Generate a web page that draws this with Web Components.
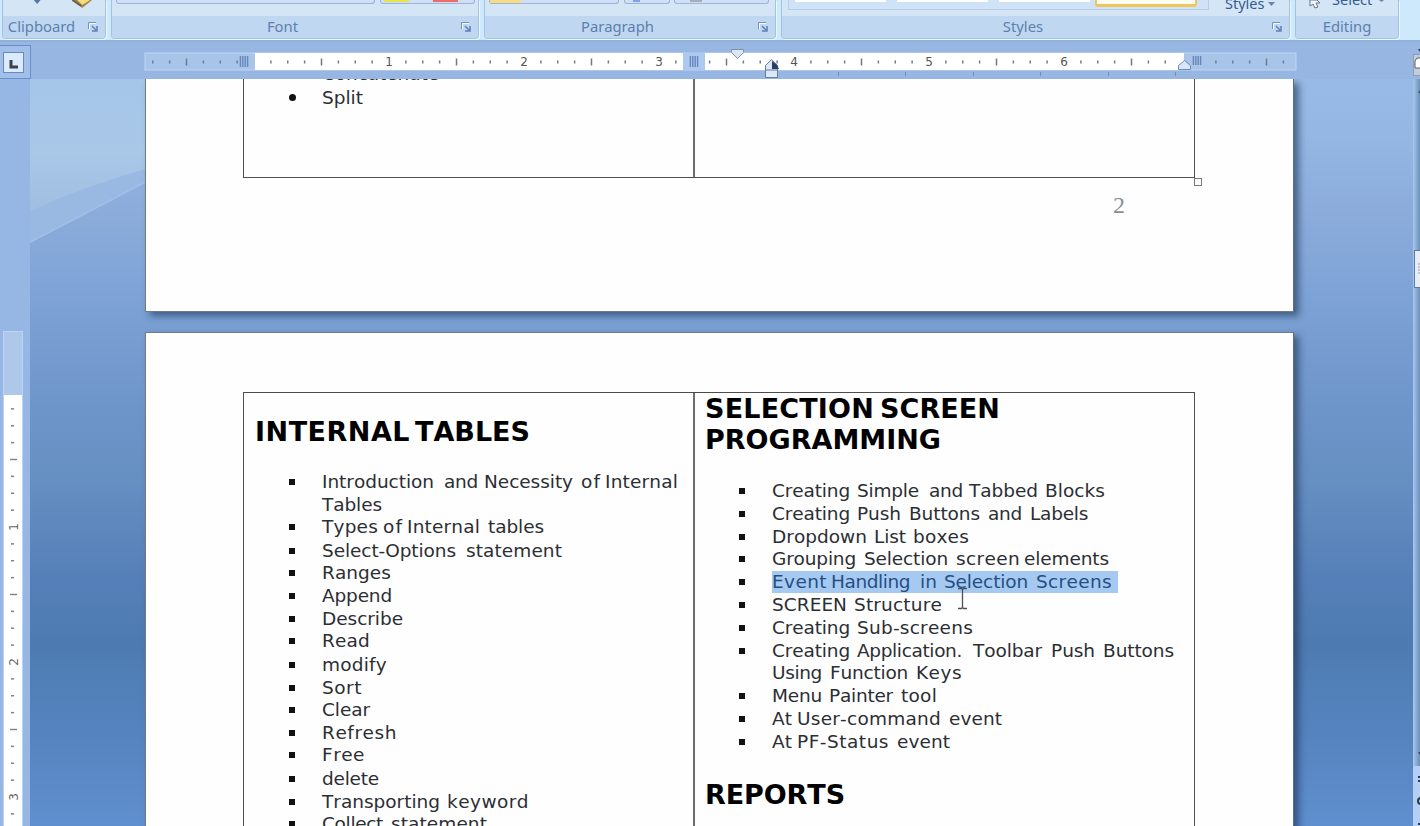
<!DOCTYPE html>
<html lang="en">
<head>
<meta charset="utf-8">
<title>Document editor</title>
<style>
html,body{margin:0;height:826px;width:1420px;overflow:hidden;background:#96b7e3}
</style>
</head>
<body>
<editor-app></editor-app>
<script>
const define=(name,html,setup)=>{
  customElements.define(name,class extends HTMLElement{
    constructor(){super();this.attachShadow({mode:'open'});}
    connectedCallback(){
      const t=document.createElement('template');t.innerHTML=html;
      this.shadowRoot.replaceChildren(t.content.cloneNode(true));
      if(setup)setup(this,this.shadowRoot);
    }
  });
};

/* Ribbon group: clipped controls above a caption band */
define('ribbon-group',`<style>
:host{display:flex;flex-direction:column;box-sizing:border-box;height:39px;border:1px solid #a5c1e0;border-top:0;border-radius:0 0 4px 4px;background:#d2e4f6;box-shadow:1px 1px 0 #e9f8ff;overflow:hidden;font:14.8px "Noto Sans","Open Sans",sans-serif;color:#5d80ae}
.body{height:16px;flex:none;background:#d4e5f6;display:flex}
.cap{height:22px;background:#bfd7f0;display:flex;align-items:center}
.cap span{flex:1;text-align:center;line-height:21px;margin-top:-1px}
svg{width:12px;height:12px;margin:-1px 6px 0 7px;flex:none}
</style><div class="body"><slot></slot></div><div class="cap"><span></span></div>`,(h,r)=>{
  r.querySelector('span').textContent=h.getAttribute('label');
  if(!h.hasAttribute('plain'))r.querySelector('.cap').insertAdjacentHTML('beforeend','<svg viewBox="0 0 12 12" fill="none"><path d="M1.5 8V1.5H9" stroke="#7692bd"/><path d="M2.5 8V2.5H9" stroke="#f2f9ff"/><path d="M5 5l4 4M10 5v5H5" stroke="#6283b4" stroke-width="1.6"/></svg>');
});

/* Bottom edge of a control strip */
define('control-edge',`<style>
:host{display:block;box-sizing:border-box;height:4px;border:1px solid #9bb4d8;border-top:0;border-radius:0 0 3px 3px;background:#cfe0f6}
</style><slot></slot>`);

define('editor-ribbon',`<style>
:host{display:flex;gap:5px;height:42px;box-sizing:border-box;padding-left:2px;background:#cde9fb;border-bottom:2px solid #91b1dc;font-family:"Noto Sans","Open Sans",sans-serif}
svg{display:block}
.sw{display:block;height:2px}
.gallery{box-sizing:border-box;display:flex;gap:11px;width:421px;height:10px;border:1px solid #b6cce8;border-top:0;margin-left:6px;padding-left:6px;background:#cfe2f6}
.gallery i{width:91px;height:2px;background:#fff}
.gallery i.on{height:7px;width:102px;margin-left:-6px;box-sizing:border-box;background:#fffdf2;border:2px solid #efc65c;border-bottom-width:3px;border-top:0;border-radius:0 0 3px 3px}
.txt{font-size:14.5px;line-height:16px;color:#365b92;margin-top:-5px}
</style>
<ribbon-group label="Clipboard" style="width:104px"><svg width="102" height="10" viewBox="0 0 103 10"><path d="M31 0h7l-3.5 4z" fill="#507aa4"/><path d="M70 0h20l-10 8z" fill="#a18a4b"/><path d="M75 0h13l-8 5z" fill="#f4dc7e"/><path d="M70 0l9 6" stroke="#705d4c" stroke-width="2"/></svg></ribbon-group>
<ribbon-group label="Font" style="width:368px"><control-edge style="width:259px;margin-left:4px"></control-edge><control-edge style="width:95px;margin-left:5px"><span style="display:flex;gap:24px;padding-left:3px"><b class="sw" style="width:25px;background:#e8e44c"></b><b class="sw" style="width:25px;background:#f06a68"></b></span></control-edge></ribbon-group>
<ribbon-group label="Paragraph" style="width:292px"><control-edge style="width:130px;margin-left:4px"><b class="sw" style="width:31px;height:3px;background:#f7dc83"></b></control-edge><control-edge style="width:46px;margin-left:5px"><b class="sw" style="width:7px;margin-left:8px;background:#7aa3e8"></b></control-edge><control-edge style="width:95px;margin-left:4px"><b class="sw" style="width:12px;margin-left:15px;background:#a9abb4"></b></control-edge></ribbon-group>
<ribbon-group label="Styles" style="width:509px"><span class="gallery"><i></i><i></i><i></i><i class="on"></i></span><span class="txt" style="margin-left:16px">Styles</span><svg width="9" height="6" style="margin:1px 0 0 3px"><path d="M1 1h7l-3.500 4z" fill="#6685b0"/></svg></ribbon-group>
<ribbon-group label="Editing" plain style="width:104px"><svg width="14" height="9" style="margin-left:13px"><path d="M1 0v6l3-2 2 4 3-1-2-4h4L8 0z" fill="#f4f8fc" stroke="#62748e"/></svg><span class="txt" style="margin:-9px 0 0 9px">Select</span><svg width="7" height="3" style="margin-left:6px"><path d="M1 0h5L3.500 2z" fill="#6685b0"/></svg></ribbon-group>`);

/* Ruler scale. Inches are 135px with eighth-inch ticks. */
const INCH=135;
define('h-ruler',`<style>
:host{display:flex;align-items:stretch;height:37px;background:#97b6e2}
.tab{box-sizing:border-box;width:31px;height:34px;margin-top:3px;border:1px solid #698fd0;border-left:0;display:flex;align-items:center;padding-left:3px;background:#a2bfe9}
svg{display:block}
.scale{margin-left:113px}
text{font:12px "DejaVu Sans",sans-serif;fill:#555;text-anchor:middle}
</style><div class="tab"><svg width="21" height="21"><rect x=".5" y=".5" width="20" height="20" fill="#dcebfb" stroke="#6689c4"/><path d="M8 8v7h7" fill="none" stroke="#3b4351" stroke-width="3"/></svg></div><svg class="scale" width="1154" height="37" viewBox="144 42 1154 37"></svg>`,(h,r)=>{
  let s='<rect x="145" y="53" width="1151" height="17" fill="#a9c4e9" stroke="#bfd5f5"/><rect x="255" y="53" width="929" height="17" fill="#fff"/><rect x="683" y="53" width="22" height="17" fill="#aec9f0"/>';
  for(let i=-6;i<=61;i++){
    const x=254+i*INCH/8;
    if((x>238&&x<256)||(x>682&&x<705)||(x>767&&x<775)||(x>1182&&x<1204)||x>1290)continue;
    if(i>0&&i%8===0)s+=`<text x="${x}" y="66">${i/8}</text>`;
    else if(i%4===0)s+=`<path d="M${x} 58.500v7" stroke="#6f7884" stroke-width="1.5"/>`;
    else s+=`<path d="M${x} 60.500v3" stroke="#707b8d" stroke-width="1.5"/>`;
  }
  for(const x of [244,694,1197])for(let k=-3.6;k<=4;k+=2.4)s+=`<path d="M${x+k} 56v11" stroke="#6787ba" stroke-width="1.4" ${x===1197?'stroke-dasharray="9 2"':''}/>`;
  for(const x of [839,906,974,1041,1109,1176])s+=`<path d="M${x-.5} 72v4" stroke="#7589a8"/>`;
  s+='<path d="M731.500 49.500h12v3l-6 6-6-6z" fill="#dce6f3" stroke="#7d90ae"/><path d="M765.500 77.500v-12l6-6 6 6v12z" fill="#dce8f8" stroke="#617ca7"/><path d="M765.500 70h12" stroke="#617ca7"/><path d="M772 61v8h7l-2-4z" fill="#283f66"/><path d="M1178.500 69.500v-4l6-5 6 5v4z" fill="#d9e6f8" stroke="#6e8bbb"/>';
  r.querySelector('.scale').innerHTML=s;
});

define('v-ruler',`<style>
:host{display:block;width:30px;flex:none;background:#96b7e3}
svg{display:block}
text{font:12px "DejaVu Sans",sans-serif;fill:#666;text-anchor:middle}
</style><svg width="30" height="747" viewBox="0 79 30 747"></svg>`,(h,r)=>{
  let s='<rect x="3.500" y="331.500" width="19" height="520" fill="#aec8e9" stroke="#b9d3f5"/><rect x="4" y="395" width="18" height="440" fill="#fff"/>';
  for(let i=1;i<26;i++){
    const y=392+i*INCH/8;
    if(i%8===0)s+=`<text transform="translate(18 ${y}) rotate(-90)">${i/8}</text>`;
    else if(i%4===0)s+=`<path d="M10 ${y}h7" stroke="#7d8187" stroke-width="1.4"/>`;
    else s+=`<path d="M11 ${y}h3" stroke="#7d8187" stroke-width="1.5"/>`;
  }
  r.querySelector('svg').innerHTML=s;
});

/* A typeset line. Each word is written text@start-end, in pixels from the line origin. */
const ctx=document.createElement('canvas').getContext('2d');
define('doc-line',`<style>
:host{display:flex;align-items:flex-end;height:22.7px;color:#2b2e33;font:18.5px "DejaVu Sans",sans-serif}
.dot{width:67px;flex:none;height:22px;display:flex;align-items:center}
.dot::before{content:"";width:6px;height:6px;background:#111;margin-left:33px}
:host([bullet=none]) .dot::before,:host([head]) .dot::before{display:none}
:host([bullet=round]) .dot::before{border-radius:50%;width:7px;height:7px}
:host([head]) .dot{width:0}
:host([head]){font-size:27px;font-weight:bold;color:#000}
.t{white-space:pre;line-height:22px;letter-spacing:0;margin-left:-1px;font-kerning:none;font-variant-ligatures:none}
:host([head]) .t{line-height:32px}
:host([marked]) .t{background:#a6c9f2;color:#254f83;margin-left:-1px;width:346px}
</style><span class="dot"></span><span class="t"></span>`,(h,r)=>{
  const head=h.hasAttribute('head'),size=head?27:18.5;
  ctx.font=(head?'bold ':'')+size+'px "DejaVu Sans"';
  ctx.fontKerning='none';
  const sp=ctx.measureText(' ').width,t=r.querySelector('.t');
  let cur=0;
  h.getAttribute('words').split(' ').forEach((w,i)=>{
    const [text,range]=w.split('@'),[a,b]=range.split('-').map(Number);
    const nat=ctx.measureText(text).width,ls=(b-a+2-nat)/text.length;
    if(i){t.append(' ');cur+=sp;}
    const e=document.createElement('span');
    e.textContent=text;e.style.letterSpacing=ls+'px';e.style.marginLeft=(a-cur)+'px';
    t.append(e);cur=a+nat+ls*text.length;
  });
});

define('doc-page',`<style>
:host{display:flex;flex-direction:column;box-sizing:border-box;width:1149px;background:#fefefe;border:1px solid #737a82;border-right-color:#58708e;padding:0 99px 0 97px;box-shadow:5px 4px 7px rgba(25,48,82,.6);overflow:visible;flex:none}
</style><slot></slot>`);

define('doc-table',`<style>
:host{display:grid;grid-template-columns:451px 499px;box-sizing:border-box;width:952px;border:solid #505050;border-width:0 1px 1px;outline:0;flex:none;position:relative;background:#fefefe}
.c{box-sizing:border-box;padding-left:12px;overflow:hidden}
.c:first-of-type{border-right:2px solid #6c6c6c}
.c:last-of-type{padding-left:11px}
</style><div class="c"><slot name="left"></slot></div><div class="c"><slot name="right"></slot></div>`);

define('scroll-strip',`<style>
:host{display:block;width:7px;flex:none}
svg{display:block}
</style><svg width="7" height="747" viewBox="1413 79 7 747"><defs><linearGradient id="g"><stop stop-color="#a9c9ef"/><stop offset="1" stop-color="#698fb9"/></linearGradient></defs><rect x="1413" y="79" width="7" height="687" fill="url(#g)"/><rect x="1413" y="766" width="7" height="60" fill="#b4cef5"/><path d="M1418 93l2-3v3z" fill="#334b70"/><rect x="1414.500" y="250.500" width="8" height="37" fill="#e6edf8" stroke="#61799b"/><path d="M1418 264h2m-2 3h2m-2 3h2m-2 3h2" stroke="#93a2b8"/><path d="M1418 752h2v3z" fill="#334b70"/><path d="M1418 777h2m-2 4h2M1418 824h2" stroke="#2d3b53" stroke-width="2"/><circle cx="1421" cy="801" r="3" fill="none" stroke="#2d3b53" stroke-width="2"/></svg>`);

const L=(words,h,extra='')=>`<doc-line words="${words}" style="height:${h}px" ${extra}></doc-line>`;
const left=[
  L('INTERNAL@0-153 TABLES@160-273',54.5,'head'),
  L('Introduction@0-110 and@122-154 Necessity@162-249 of@259-277 Internal@283-354',45.5),
  L('Tables@0-58',22.6,'bullet="none"'),
  L('Types@0-54 of@61-79 Internal@85-156 tables@166-220',22.6),
  L('Select-Options@0-132 statement@144-238',23.7),
  L('Ranges@0-67',22.6),L('Append@0-68',22.6),L('Describe@0-79',22.6),L('Read@0-46',22.6),
  L('modify@0-63',23.7),L('Sort@0-38',22.6),L('Clear@0-46',22.6),L('Refresh@0-73',22.6),L('Free@0-41',22.6),
  L('delete@0-55',23.7),L('Transporting@0-116 keyword@125-205',22.6),L('Collect@0-59 statement@69-163',22.6)].join('');
const right=[
  L('SELECTION@0-167 SCREEN@175-293',32,'head'),
  L('PROGRAMMING@0-234',31,'head'),
  L('Creating@0-76 Simple@85-145 and@157-189 Tabbed@197-264 Blocks@273-331',45.5),
  L('Creating@0-76 Push@85-127 Buttons@137-206 and@216-248 Labels@258-314',23.7),
  L('Dropdown@0-93 List@102-132 boxes@141-195',22.6),
  L('Grouping@0-82 Selection@92-174 screen@184-246 elements@252-335',22.6),
  L('Event@0-53 Handling@59-136 in@148-163 Selection@172-254 Screens@264-338',22.6,'marked'),
  L('SCREEN@0-73 Structure@82-168',22.6),
  L('Creating@0-76 Sub-screens@85-199',23.7),
  L('Creating@0-76 Application.@85-188 Toolbar@201-268 Push@279-321 Buttons@331-400',22.6),
  L('Using@0-48 Function@58-134 Keys@144-188',22.6,'bullet="none"'),
  L('Menu@0-48 Painter@57-119 tool@129-163',22.6),
  L('At@0-18 User-command@25-167 event@177-228',22.6),
  L('At@0-18 PF-Status@25-115 event@125-176',23.7),
  L('REPORTS@0-138',58,'head')].join('');

define('doc-canvas',`<style>
:host{display:block;flex:1;height:747px;overflow:hidden;position:relative;background:linear-gradient(#98bae6 0,#94b7e4 55px,#8caddb 130px,#82a6d8 190px,#7399ce 290px,#668fc2 400px,#557fb8 500px,#4d7bb1 565px,#5684c0 660px,#608fcf 747px)}
.sky{position:absolute;left:0;top:0}
.stack{position:relative;display:flex;flex-direction:column;gap:20px;margin-left:115px}
.first{height:233px;border-top:0}
.second{height:620px;padding-top:59px}
.top{height:99px}
.rest{height:560px;border-top:1px solid #4c4c4c}
.num{font:24px "Liberation Serif",serif;color:#8c8f91;margin:14px 0 0 870px;line-height:27px}
.handle{position:absolute;left:1164px;top:99px;width:6px;height:6px;border:1px solid #777;background:#fff}
.ibeam{position:absolute;left:927px;top:508px}
</style>
<svg class="sky" width="115" height="170"><defs><linearGradient id="s" x2="0" y2="1"><stop stop-color="#a5c5e9"/><stop offset=".55" stop-color="#a9c8e8"/><stop offset="1" stop-color="#a0bee1"/></linearGradient></defs><path d="M0 0h115v104Q65 130 0 164z" fill="#9ab9e2"/><path d="M0 0h115v90Q55 107 0 132z" fill="url(#s)"/><path d="M0 163Q65 130 115 103" fill="none" stroke="#a4bee8" stroke-width="1.5"/></svg>
<div class="stack">
<doc-page class="first"><doc-table class="top"><div slot="left">${L('Concatenate@0-115',6,'bullet="none"')}${L('Split@0-39',23.6,'bullet="round"')}</div></doc-table><div class="num">2</div></doc-page>
<doc-page class="second"><doc-table class="rest"><div slot="left">${left}</div><div slot="right">${right}</div></doc-table></doc-page>
</div><span class="handle"></span>
<svg class="ibeam" width="12" height="23"><path d="M1 1.500h3.500l1 1 1-1H10M5.500 2v18M1 21.500h3.500l1-1 1 1H10" fill="none" stroke="#4d5157" stroke-width="1.3"/></svg>`);

define('split-knob',`<style>:host{position:absolute;right:0;top:48px}svg{display:block}</style><svg width="7" height="30"><path d="M5 1h2v3z" fill="#27364f"/><rect x=".5" y="6.500" width="9" height="21" fill="#c4ccd8" stroke="#8f9eb3"/><path d="M7 10H4l-2 3v7h5" fill="#fff" stroke="#555e6d"/></svg>`);

define('editor-app',`<style>
:host{display:flex;flex-direction:column;width:1420px;height:826px;overflow:hidden;position:relative}
.work{display:flex;height:747px}
</style><editor-ribbon></editor-ribbon><h-ruler></h-ruler><div class="work"><v-ruler></v-ruler><doc-canvas></doc-canvas><scroll-strip></scroll-strip></div><split-knob></split-knob>`);
</script>
</body>
</html>
